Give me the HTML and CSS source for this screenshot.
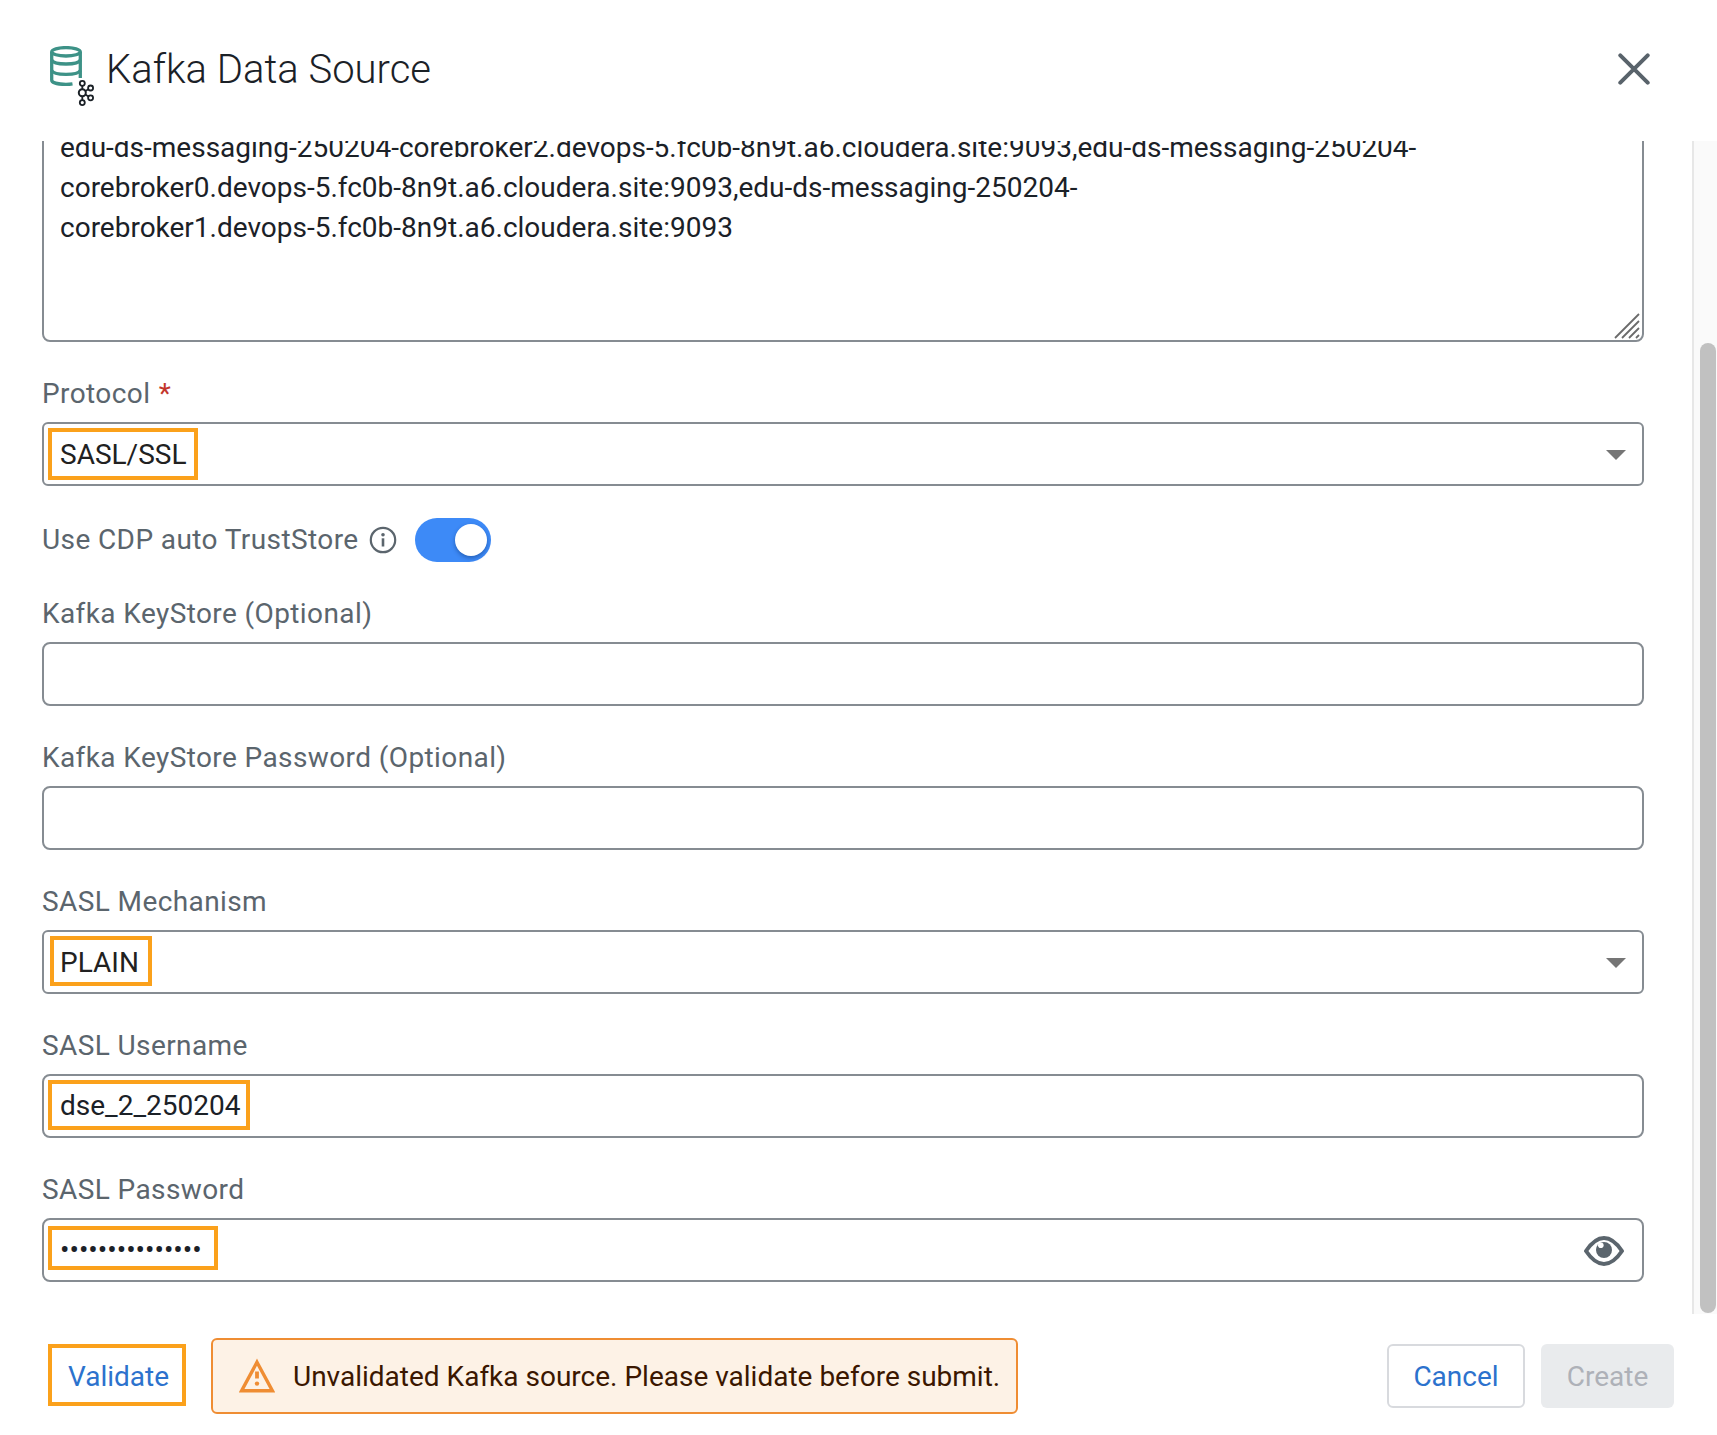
FILE: index.html
```html
<!DOCTYPE html>
<html lang="en">
<head>
<meta charset="utf-8">
<title>Kafka Data Source</title>
<link rel="stylesheet" href="styles.css">
</head>
<body>
<main class="dialog">
  <header class="header">
    <svg class="source-icon" viewBox="0 0 46 62" width="46" height="62" fill="none">
      <g stroke="#3d9287" stroke-width="3.300">
        <ellipse cx="16" cy="5.800" rx="14.300" ry="4.200"/>
        <path d="M1.700 6v28c0 2.600 6 4.400 14.300 4.400q3.500 0 6.500-.5M30.300 6v26"/>
        <path d="M1.600 14c1 2.400 6.400 4 14.400 4s13.400-1.600 14.400-4M1.600 24.300c1 2.400 6.400 4 14.400 4s13.400-1.600 14.400-4"/>
      </g>
      <g stroke="#1b2127" stroke-width="1.800">
        <circle cx="32.300" cy="37.300" r="2.500"/>
        <circle cx="32.300" cy="46.800" r="3.500" stroke-width="2"/>
        <circle cx="32.300" cy="56.600" r="2.500"/>
        <circle cx="40.600" cy="42" r="2.500"/>
        <circle cx="40.600" cy="51.800" r="2.500"/>
        <path d="M32.300 39.800v3.500M32.300 50.300v3.800M35.400 45l3-1.700M35.400 48.600l3 1.800"/>
      </g>
    </svg>
    <h1 class="title">Kafka Data Source</h1>
    <svg class="close" viewBox="0 0 32 32" width="32" height="32"><path d="M2.300 2.300l27.400 27.400M29.700 2.300L2.300 29.700" stroke="#59636b" stroke-width="4" stroke-linecap="round"/></svg>
  </header>

  <section class="body">
    <form class="form">
      <div class="control textarea">edu-ds-messaging-250204-corebroker2.devops-5.fc0b-8n9t.a6.cloudera.site:9093,edu-ds-messaging-250204-<br>corebroker0.devops-5.fc0b-8n9t.a6.cloudera.site:9093,edu-ds-messaging-250204-<br>corebroker1.devops-5.fc0b-8n9t.a6.cloudera.site:9093
        <svg class="grip" viewBox="0 0 26 26" width="26" height="26"><path d="M1 25L25 1M8 25L25 8M15 25L25 15M22 25l3-3" stroke="#6b6b6b" stroke-width="1.800"/></svg>
      </div>

      <div class="field">
        <label class="label">Protocol <span class="required">*</span></label>
        <div class="control select"><span class="value">SASL/SSL</span><i class="caret"></i><i class="mark mark-protocol"></i></div>
      </div>

      <div class="toggle-row">
        <span class="label">Use CDP auto TrustStore</span>
        <svg class="info" viewBox="0 0 28 28" width="28" height="28"><circle cx="14" cy="14" r="12.200" fill="none" stroke="#5b656d" stroke-width="2.200"/><circle cx="14" cy="8.700" r="1.800" fill="#5b656d"/><path d="M14 12.300v8.200" stroke="#5b656d" stroke-width="2.600"/></svg>
        <span class="toggle"><i class="knob"></i></span>
      </div>

      <div class="field">
        <label class="label">Kafka KeyStore (Optional)</label>
        <div class="control"></div>
      </div>
      <div class="field">
        <label class="label">Kafka KeyStore Password (Optional)</label>
        <div class="control"></div>
      </div>
      <div class="field">
        <label class="label">SASL Mechanism</label>
        <div class="control select"><span class="value">PLAIN</span><i class="caret"></i><i class="mark mark-mechanism"></i></div>
      </div>
      <div class="field">
        <label class="label">SASL Username</label>
        <div class="control"><span class="value">dse_2_250204</span><i class="mark mark-username"></i></div>
      </div>
      <div class="field">
        <label class="label">SASL Password</label>
        <div class="control"><span class="value">•••••••••••••••</span>
          <svg class="eye" viewBox="0 0 40 30" width="40" height="30"><path d="M2 15C7 7.500 13 2 20 2s13 5.500 18 13C33 22.500 27 28 20 28S7 22.500 2 15z" fill="none" stroke="#5b656d" stroke-width="4" stroke-linejoin="round"/><circle cx="20" cy="14" r="8" fill="#5b656d"/><circle cx="16.800" cy="9.300" r="2.800" fill="#fff"/></svg>
          <i class="mark mark-password"></i>
        </div>
      </div>
    </form>
    <div class="scrollbar"><i class="thumb"></i></div>
  </section>

  <footer class="footer">
    <button class="validate">Validate</button>
    <div class="alert">
      <svg class="warn" viewBox="0 0 36 35" width="36" height="35"><path d="M18 4.200L33.400 32.800H2.600z" fill="none" stroke="#ef8d33" stroke-width="3.400"/><path d="M18 13.500v7" stroke="#ef8d33" stroke-width="3.800"/><circle cx="18" cy="25.600" r="2.200" fill="#ef8d33"/></svg>
      <span class="message">Unvalidated Kafka source. Please validate before submit.</span>
    </div>
    <div class="actions">
      <button class="btn cancel">Cancel</button>
      <button class="btn create" disabled>Create</button>
    </div>
  </footer>
</main>
</body>
</html>
```
FILE: styles.css
```css
* { box-sizing: border-box; }
body {
  margin: 0;
  background: #fff;
  color: #1b2127;
  font: 400 28px/40px Roboto, "Liberation Sans", sans-serif;
}
button { font: inherit; letter-spacing: inherit; margin: 0; padding: 2px 0 0; }
svg { display: block; flex: none; }

.dialog { display: flex; flex-direction: column; height: 1435px; overflow: hidden; }

.header { display: flex; align-items: flex-start; height: 141px; padding: 46px 67px 0 50px; }
.title { margin: 0 0 0 10px; font-size: 40px; line-height: 48px; font-weight: 300; }
.close { margin: 7px 0 0 auto; }

.body { display: flex; height: 1173px; overflow: hidden; }
.form { flex: 1; margin: -30px 48px 0 42px; display: flex; flex-direction: column; gap: 32px; }
.field { display: flex; flex-direction: column; gap: 8px; }
.label { color: #5b656d; letter-spacing: 0.4px; white-space: pre; }
.required { margin-left: 1px; color: #c3362b; }

.control {
  position: relative;
  display: flex;
  align-items: center;
  justify-content: space-between;
  height: 64px;
  padding: 0 16px;
  border: 2px solid #868c92;
  border-radius: 8px;
}
.select { padding-top: 2px; border-radius: 6px; color: #212121; }
.textarea { display: block; height: 231px; padding-top: 15px; white-space: nowrap; }
.grip { position: absolute; right: 2px; bottom: 1px; }
.caret { border: 10px solid transparent; border-top-color: #757575; border-bottom: 0; }
.eye { margin: 2px 2px 0 0; }

/* Callout frames drawn over the values */
.mark { position: absolute; left: 4px; border: 4px solid #fba11b; }
.mark-protocol { top: 4px; width: 150px; height: 52px; }
.mark-mechanism { top: 4px; left: 6px; width: 102px; height: 50px; }
.mark-username { top: 4px; width: 202px; height: 50px; }
.mark-password { top: 6px; width: 170px; height: 44px; }

.toggle-row { display: flex; align-items: center; height: 44px; }
.info { margin-left: 10px; }
.toggle { width: 76px; height: 44px; margin-left: 18px; padding: 6px 4px; border-radius: 22px; background: #3d8af7; display: flex; justify-content: flex-end; }
.knob { width: 32px; height: 32px; border-radius: 50%; background: #fff; box-shadow: 0 2px 4px rgba(0, 35, 90, 0.4); }

.scrollbar { width: 25px; border-left: 2px solid #e7e7e7; background: #fafafa; padding: 202px 1px 1px 6px; display: flex; }
.thumb { flex: 1; border-radius: 8px; background: #c1c1c1; }

.footer { display: flex; align-items: center; height: 121px; padding: 2px 43px 0 48px; }
.validate { width: 138px; height: 62px; margin-top: -2px; padding: 4px 0 0 3px; border: 4px solid #fba11b; background: #fff; color: #2c72cd; }
.alert { display: flex; align-items: center; width: 807px; height: 76px; margin-left: 25px; padding-left: 26px; gap: 18px; border: 2px solid #ef8d33; border-radius: 6px; background: #fdf2e6; color: #3b1700; white-space: nowrap; }
.message { padding-top: 2px; }
.actions { display: flex; gap: 16px; margin-left: auto; }
.btn { height: 64px; border-radius: 6px; }
.cancel { width: 138px; border: 2px solid #d8dade; background: #fff; color: #2c72cd; }
.create { width: 133px; border: 0; background: #e9ebed; color: #aeb1b8; }
```
